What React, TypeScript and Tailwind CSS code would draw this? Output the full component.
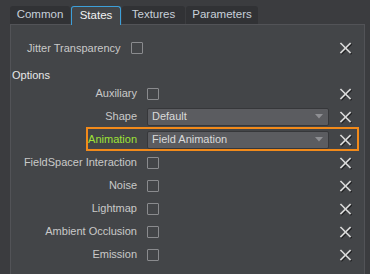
import React from 'react';

const font = { fontFamily: '"Liberation Sans", Arial, sans-serif' };

const CloseIcon: React.FC = () => (
  <svg width="14" height="14" viewBox="0 0 14 14" className="block">
    <g stroke="#1c1d1f" strokeWidth="1.8" strokeLinecap="square">
      <line x1="2.8" y1="3.6" x2="11.8" y2="12.6" />
      <line x1="11.8" y1="3.6" x2="2.8" y2="12.6" />
    </g>
    <g stroke="#d6d6d6" strokeWidth="1.7" strokeLinecap="square">
      <line x1="2" y1="2.6" x2="11" y2="11.6" />
      <line x1="11" y1="2.6" x2="2" y2="11.6" />
    </g>
  </svg>
);

const Checkbox: React.FC = () => (
  <div className="w-[12px] h-[12px] border border-[#8a8b8e] rounded-[1px]" />
);

const Select: React.FC<{ value: string }> = ({ value }) => (
  <div className="w-[182px] h-[18px] rounded-[2px] bg-[#5b5c60] border border-[#36373a] flex items-center pl-[4px] pr-[5px]">
    <span className="text-[11px] text-[#dadada] flex-1 leading-none">{value}</span>
    <svg width="8" height="5" viewBox="0 0 8 5">
      <path d="M0 0 H8 L4 4.5 Z" fill="#8e8f93" />
    </svg>
  </div>
);

interface Row {
  label: string;
  kind: 'check' | 'select';
  value?: string;
  active?: boolean;
}

const rows: Row[] = [
  { label: 'Auxiliary', kind: 'check' },
  { label: 'Shape', kind: 'select', value: 'Default' },
  { label: 'Animation', kind: 'select', value: 'Field Animation', active: true },
  { label: 'FieldSpacer Interaction', kind: 'check' },
  { label: 'Noise', kind: 'check' },
  { label: 'Lightmap', kind: 'check' },
  { label: 'Ambient Occlusion', kind: 'check' },
  { label: 'Emission', kind: 'check' },
];

const tabs = [
  { name: 'Common', w: 'w-[60px]' },
  { name: 'States', w: 'w-[50px]', active: true },
  { name: 'Textures', w: 'w-[63px]' },
  { name: 'Parameters', w: 'w-[72px]' },
];

export default function App() {
  return (
    <div className="w-[370px] h-[274px] bg-[#3b3c3f] overflow-hidden pt-[6px] pl-[10px] flex flex-col" style={font}>
      <div className="flex gap-[1px] h-[18px] relative z-10">
        {tabs.map((t) =>
          t.active ? (
            <div
              key={t.name}
              className={`${t.w} h-[19px] rounded-t-[3px] bg-[#434548] border border-b-0 border-[#3d9fd9] flex items-center justify-center text-[11.5px] text-[#f2f2f2]`}
            >
              {t.name}
            </div>
          ) : (
            <div
              key={t.name}
              className={`${t.w} h-[18px] rounded-t-[3px] bg-[#313235] flex items-center justify-center text-[11.5px] text-[#c8d0da]`}
            >
              {t.name}
            </div>
          )
        )}
      </div>
      <div className="w-[355px] flex-1 bg-[#434548] border-l border-t border-r border-[#525357]">
        <div className="h-[24px] mt-[11px] flex items-center pl-[16px] pr-[11px]">
          <span className="text-[11px] text-[#c9c9c9]">Jitter Transparency</span>
          <div className="ml-[10px]">
            <Checkbox />
          </div>
          <div className="ml-auto">
            <CloseIcon />
          </div>
        </div>
        <div className="h-[22px] pt-[9px] pl-[1px] flex items-center text-[11px] text-[#e8e8e8]">Options</div>
        {rows.map((r) => (
          <div key={r.label} className="relative h-[23px] flex items-center pr-[11px]">
            {r.active && (
              <div className="absolute left-[75px] right-[5px] top-[-1px] bottom-0 border-2 border-[#f28a1a]" />
            )}
            <span
              className={`w-[126px] text-right text-[11px] whitespace-nowrap ${
                r.active ? 'text-[#9fe236]' : 'text-[#c9c9c9]'
              }`}
            >
              {r.label}
            </span>
            <div className="ml-[10px]">
              {r.kind === 'check' ? <Checkbox /> : <Select value={r.value ?? ''} />}
            </div>
            <div className="ml-auto">
              <CloseIcon />
            </div>
          </div>
        ))}
      </div>
    </div>
  );
}
